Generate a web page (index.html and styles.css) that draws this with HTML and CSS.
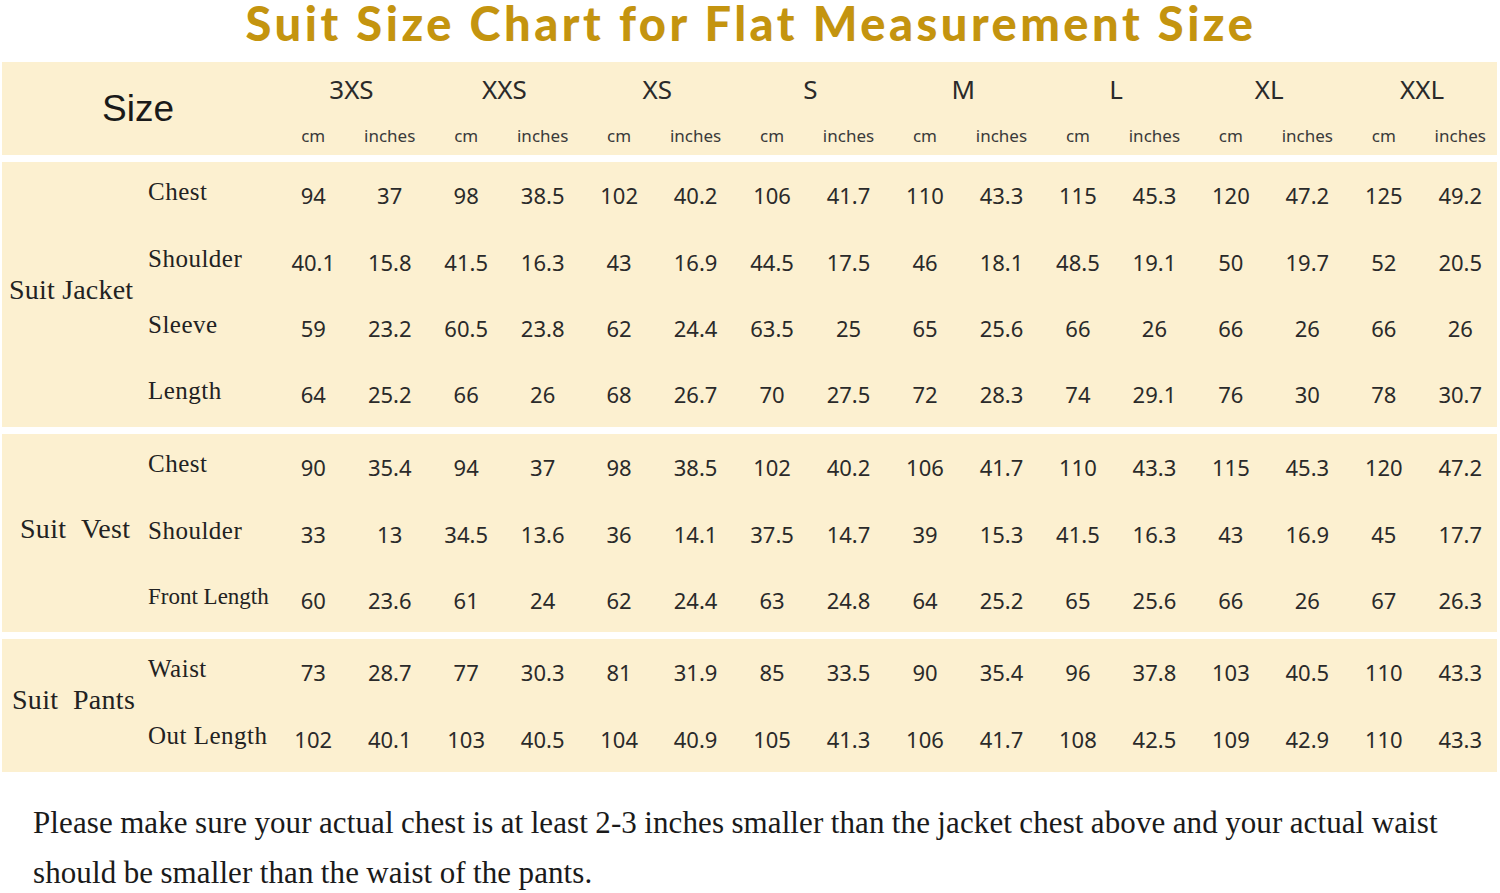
FILE: index.html
```html
<!DOCTYPE html>
<html>
<head>
<meta charset="utf-8">
<link rel="stylesheet" href="styles.css">
</head>
<body>
<h1 class="title">Suit Size Chart for Flat Measurement Size</h1>
<div class="chart">
  <div class="band head">
    <div class="size-label">Size</div>
    <div class="sz">3XS</div><div class="sz">XXS</div><div class="sz">XS</div><div class="sz">S</div>
    <div class="sz">M</div><div class="sz">L</div><div class="sz">XL</div><div class="sz">XXL</div>
    <div class="u">cm</div><div class="u">inches</div><div class="u">cm</div><div class="u">inches</div>
    <div class="u">cm</div><div class="u">inches</div><div class="u">cm</div><div class="u">inches</div>
    <div class="u">cm</div><div class="u">inches</div><div class="u">cm</div><div class="u">inches</div>
    <div class="u">cm</div><div class="u">inches</div><div class="u">cm</div><div class="u">inches</div>
  </div>

  <div class="band sec r4">
    <div class="cat">Suit Jacket</div>
    <div class="m">Chest</div>
    <div class="n">94</div><div class="n">37</div><div class="n">98</div><div class="n">38.5</div><div class="n">102</div><div class="n">40.2</div><div class="n">106</div><div class="n">41.7</div><div class="n">110</div><div class="n">43.3</div><div class="n">115</div><div class="n">45.3</div><div class="n">120</div><div class="n">47.2</div><div class="n">125</div><div class="n">49.2</div>
    <div class="m">Shoulder</div>
    <div class="n">40.1</div><div class="n">15.8</div><div class="n">41.5</div><div class="n">16.3</div><div class="n">43</div><div class="n">16.9</div><div class="n">44.5</div><div class="n">17.5</div><div class="n">46</div><div class="n">18.1</div><div class="n">48.5</div><div class="n">19.1</div><div class="n">50</div><div class="n">19.7</div><div class="n">52</div><div class="n">20.5</div>
    <div class="m">Sleeve</div>
    <div class="n">59</div><div class="n">23.2</div><div class="n">60.5</div><div class="n">23.8</div><div class="n">62</div><div class="n">24.4</div><div class="n">63.5</div><div class="n">25</div><div class="n">65</div><div class="n">25.6</div><div class="n">66</div><div class="n">26</div><div class="n">66</div><div class="n">26</div><div class="n">66</div><div class="n">26</div>
    <div class="m">Length</div>
    <div class="n">64</div><div class="n">25.2</div><div class="n">66</div><div class="n">26</div><div class="n">68</div><div class="n">26.7</div><div class="n">70</div><div class="n">27.5</div><div class="n">72</div><div class="n">28.3</div><div class="n">74</div><div class="n">29.1</div><div class="n">76</div><div class="n">30</div><div class="n">78</div><div class="n">30.7</div>
  </div>

  <div class="band sec r3">
    <div class="cat vest">Suit&nbsp;&nbsp;Vest</div>
    <div class="m">Chest</div>
    <div class="n">90</div><div class="n">35.4</div><div class="n">94</div><div class="n">37</div><div class="n">98</div><div class="n">38.5</div><div class="n">102</div><div class="n">40.2</div><div class="n">106</div><div class="n">41.7</div><div class="n">110</div><div class="n">43.3</div><div class="n">115</div><div class="n">45.3</div><div class="n">120</div><div class="n">47.2</div>
    <div class="m">Shoulder</div>
    <div class="n">33</div><div class="n">13</div><div class="n">34.5</div><div class="n">13.6</div><div class="n">36</div><div class="n">14.1</div><div class="n">37.5</div><div class="n">14.7</div><div class="n">39</div><div class="n">15.3</div><div class="n">41.5</div><div class="n">16.3</div><div class="n">43</div><div class="n">16.9</div><div class="n">45</div><div class="n">17.7</div>
    <div class="m small">Front Length</div>
    <div class="n">60</div><div class="n">23.6</div><div class="n">61</div><div class="n">24</div><div class="n">62</div><div class="n">24.4</div><div class="n">63</div><div class="n">24.8</div><div class="n">64</div><div class="n">25.2</div><div class="n">65</div><div class="n">25.6</div><div class="n">66</div><div class="n">26</div><div class="n">67</div><div class="n">26.3</div>
  </div>

  <div class="band sec r2">
    <div class="cat pants">Suit&nbsp;&nbsp;Pants</div>
    <div class="m">Waist</div>
    <div class="n">73</div><div class="n">28.7</div><div class="n">77</div><div class="n">30.3</div><div class="n">81</div><div class="n">31.9</div><div class="n">85</div><div class="n">33.5</div><div class="n">90</div><div class="n">35.4</div><div class="n">96</div><div class="n">37.8</div><div class="n">103</div><div class="n">40.5</div><div class="n">110</div><div class="n">43.3</div>
    <div class="m">Out Length</div>
    <div class="n">102</div><div class="n">40.1</div><div class="n">103</div><div class="n">40.5</div><div class="n">104</div><div class="n">40.9</div><div class="n">105</div><div class="n">41.3</div><div class="n">106</div><div class="n">41.7</div><div class="n">108</div><div class="n">42.5</div><div class="n">109</div><div class="n">42.9</div><div class="n">110</div><div class="n">43.3</div>
  </div>
</div>
<p class="note">Please make sure your actual chest is at least 2-3 inches smaller than the jacket chest above and your actual waist<br>should be smaller than the waist of the pants.</p>
</body>
</html>
```

FILE: styles.css
```css
html, body {
  margin: 0;
  padding: 0;
  background: #ffffff;
}
body {
  width: 1500px;
  height: 893px;
  overflow: hidden;
}
.title {
  margin: 0;
  height: 48px;
  line-height: 46px;
  text-align: center;
  font-family: "Lato", "DejaVu Sans", sans-serif;
  font-weight: 900;
  font-size: 47px;
  color: #c4940f;
  letter-spacing: 3.5px;
  padding-left: 2px;
}
.chart {
  margin: 14px 3px 0 2px;
  display: flex;
  flex-direction: column;
  gap: 7px;
}
.band {
  background: #fcf0d0;
  display: grid;
  grid-template-columns: 138px 135px repeat(16, 76.47px);
}
.head {
  height: 93px;
  grid-template-rows: 54px 39px;
}
.size-label {
  grid-row: 1 / 3;
  grid-column: 1 / 3;
  font-family: "Liberation Sans", Arial, sans-serif;
  font-size: 37px;
  color: #1a1a1a;
  padding-left: 100px;
  padding-top: 26px;
}
.sz {
  grid-column: span 2;
  text-align: center;
  font-family: "Noto Sans", sans-serif;
  font-size: 26px;
  color: #2a2a2a;
  padding-top: 7px;
  line-height: 40px;
}
.u {
  text-align: center;
  font-family: "Noto Sans", sans-serif;
  font-size: 17px;
  color: #3a3a3a;
  line-height: 24px;
  padding-top: 8px;
}
.sec {
  grid-auto-rows: 66.4px;
}
.r4 { height: 265px; }
.r3 { height: 198px; }
.r2 { height: 133px; }
.r4 .cat { grid-row: 1 / 5; }
.r3 .cat { grid-row: 1 / 4; }
.r2 .cat { grid-row: 1 / 3; }
.cat {
  grid-column: 1;
  align-self: center;
  font-family: "Liberation Serif", "DejaVu Serif", serif;
  font-size: 28px;
  color: #222;
  padding-left: 7px;
  margin-top: -10px;
  white-space: nowrap;
  letter-spacing: 0.2px;
}
.cat.vest { padding-left: 18px; letter-spacing: 0.3px; }
.cat.pants { padding-left: 10px; letter-spacing: 0.3px; }
.m {
  grid-column: 2;
  align-self: center;
  font-family: "Liberation Serif", "DejaVu Serif", serif;
  font-size: 25px;
  color: #222;
  padding-left: 8px;
  margin-top: -6px;
  white-space: nowrap;
  letter-spacing: 0.5px;
}
.m.small { font-size: 23px; letter-spacing: 0; }
.n {
  align-self: center;
  text-align: center;
  font-family: "Noto Sans", sans-serif;
  font-size: 22px;
  color: #2a2a2a;
}
.note {
  margin: 26px 0 0 33px;
  font-family: "Liberation Serif", "DejaVu Serif", serif;
  font-size: 31px;
  line-height: 50px;
  color: #1a1a1a;
  letter-spacing: 0.1px;
  word-spacing: -0.5px;
  white-space: nowrap;
}
```
